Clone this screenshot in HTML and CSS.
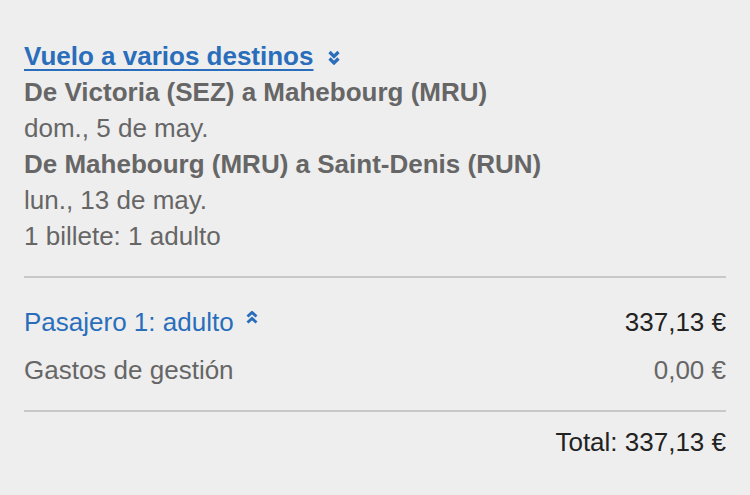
FILE: index.html
```html
<!DOCTYPE html>
<html lang="es">
<head>
  <meta charset="utf-8" />
  <meta name="viewport" content="width=device-width, initial-scale=1" />
  <title>Resumen del viaje</title>
  <link rel="stylesheet" href="styles.css">
</head>
<body>
  <section class="summary">
    <div class="trip">
      <a class="trip-title" href="#">
        <span class="trip-link">Vuelo a varios destinos</span>
        <svg class="chevrons chevrons-down" viewBox="0 0 12 15" fill="none">
          <path d="M1.5 2L6 6.5L10.5 2" stroke="currentColor" stroke-width="3.2"/>
          <path d="M1.5 8.5L6 13L10.5 8.5" stroke="currentColor" stroke-width="3.2"/>
        </svg>
      </a>
      <p class="leg">De Victoria (SEZ) a Mahebourg (MRU)</p>
      <p>dom., 5 de may.</p>
      <p class="leg">De Mahebourg (MRU) a Saint-Denis (RUN)</p>
      <p>lun., 13 de may.</p>
      <p>1 billete: 1 adulto</p>
    </div>

    <div class="prices">
      <div class="price-row">
        <a class="passenger" href="#">
          Pasajero 1: adulto
          <svg class="chevrons chevrons-up" viewBox="0 0 12 13" fill="none">
            <path d="M1.5 5.5L6 1.5L10.5 5.5" stroke="currentColor" stroke-width="3"/>
            <path d="M1.5 11.5L6 7.5L10.5 11.5" stroke="currentColor" stroke-width="3"/>
          </svg>
        </a>
        <span class="amount">337,13 €</span>
      </div>
      <div class="price-row muted">
        <span>Gastos de gestión</span>
        <span>0,00 €</span>
      </div>
    </div>

    <div class="total">Total: 337,13 €</div>
  </section>
</body>
</html>
```

FILE: styles.css
```css
* {
  margin: 0;
  padding: 0;
  box-sizing: border-box;
}

body {
  background: #eeeeee;
  font-family: 'Liberation Sans', Arial, Helvetica, sans-serif;
  font-size: 26px;
  color: #666666;
}

.summary {
  padding: 38px 24px 0;
}

.trip {
  padding-bottom: 22px;
  border-bottom: 2px solid #c8c8c8;

  p {
    line-height: 36px;
  }

  .leg {
    font-weight: bold;
  }
}

.trip-title {
  display: flex;
  align-items: center;
  gap: 15px;
  height: 36px;
  color: #2a6ebb;
  font-weight: bold;
  text-decoration: none;
}

.trip-link {
  text-decoration: underline;
  text-decoration-thickness: 2px;
  text-underline-offset: 4px;
}

.chevrons {
  display: block;
  flex-shrink: 0;
  width: 12px;
}

.chevrons-down {
  height: 15px;
  margin-top: 2px;
}

.prices {
  padding: 20px 0 16px;
  border-bottom: 2px solid #c8c8c8;
}

.price-row {
  display: flex;
  justify-content: space-between;
  align-items: center;
  height: 48px;
}

.passenger {
  display: flex;
  align-items: center;
  gap: 12px;
  color: #2a6ebb;
  text-decoration: none;
}

.chevrons-up {
  height: 13px;
  margin-top: -9px;
}

.amount {
  color: #222222;
}

.total {
  padding-top: 12px;
  text-align: right;
  color: #222222;
  line-height: 36px;
}
```
